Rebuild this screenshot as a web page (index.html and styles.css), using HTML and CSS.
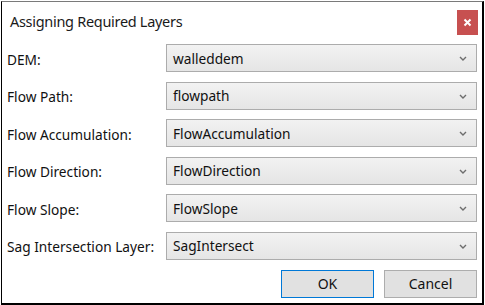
FILE: index.html
```html
<!DOCTYPE html>
<html lang="en">
<head>
    <meta charset="UTF-8">
    <title>Assigning Required Layers</title>
    <link rel="stylesheet" href="styles.css">
</head>
<body>
    <div class="dialog">
        <div class="titlebar">
            <span class="title">Assigning Required Layers</span>
            <button class="close-btn" aria-label="Close">
                <svg width="9" height="9" viewBox="0 0 9 9">
                    <path d="M1.5 1.5 L7.5 7.5 M7.5 1.5 L1.5 7.5" stroke="#fff" stroke-width="2" fill="none"/>
                </svg>
            </button>
        </div>
        <div class="form">
            <label class="field-label">DEM:</label>
            <div class="combo"><span>walleddem</span><svg class="chev" width="8" height="5" viewBox="0 0 8 5"><path d="M1 1 L4 4 L7 1" stroke="#6d6d6d" stroke-width="1.4" fill="none"/></svg></div>

            <label class="field-label">Flow Path:</label>
            <div class="combo"><span>flowpath</span><svg class="chev" width="8" height="5" viewBox="0 0 8 5"><path d="M1 1 L4 4 L7 1" stroke="#6d6d6d" stroke-width="1.4" fill="none"/></svg></div>

            <label class="field-label">Flow Accumulation:</label>
            <div class="combo"><span>FlowAccumulation</span><svg class="chev" width="8" height="5" viewBox="0 0 8 5"><path d="M1 1 L4 4 L7 1" stroke="#6d6d6d" stroke-width="1.4" fill="none"/></svg></div>

            <label class="field-label">Flow Direction:</label>
            <div class="combo"><span>FlowDirection</span><svg class="chev" width="8" height="5" viewBox="0 0 8 5"><path d="M1 1 L4 4 L7 1" stroke="#6d6d6d" stroke-width="1.4" fill="none"/></svg></div>

            <label class="field-label">Flow Slope:</label>
            <div class="combo"><span>FlowSlope</span><svg class="chev" width="8" height="5" viewBox="0 0 8 5"><path d="M1 1 L4 4 L7 1" stroke="#6d6d6d" stroke-width="1.4" fill="none"/></svg></div>

            <label class="field-label">Sag Intersection Layer:</label>
            <div class="combo"><span>SagIntersect</span><svg class="chev" width="8" height="5" viewBox="0 0 8 5"><path d="M1 1 L4 4 L7 1" stroke="#6d6d6d" stroke-width="1.4" fill="none"/></svg></div>
        </div>
        <div class="actions">
            <button class="btn btn-default">OK</button>
            <button class="btn">Cancel</button>
        </div>
    </div>
</body>
</html>
```

FILE: styles.css
```css
body {
    margin: 0;
    background-color: #ffffff;
    font-family: "Noto Sans", "Open Sans", sans-serif;
    color: #000;
}
.dialog {
    box-sizing: border-box;
    margin: 1px 0 0 1px;
    width: 483px;
    height: 304px;
    border-top: 1px solid #7a7a7a;
    border-left: 1px solid #000;
    border-right: 2px solid #000;
    border-bottom: 2px solid #000;
    background-color: #fff;
    padding: 0 5px 0 5px;
}
.titlebar {
    display: flex;
    justify-content: space-between;
    align-items: flex-start;
    height: 42px;
}
.title {
    font-size: 14.5px;
    letter-spacing: -0.3px;
    margin: 9px 0 0 3px;
    color: #1a1a1a;
}
.close-btn {
    width: 21px;
    height: 25px;
    margin: 8px -1px 0 0;
    border: none;
    padding: 0;
    background-color: #c75050;
    display: flex;
    align-items: center;
    justify-content: center;
}
.form {
    display: grid;
    grid-template-columns: 159px 1fr;
    grid-auto-rows: 28px;
    row-gap: 9.6px;
}
.field-label {
    font-size: 13.7px;
    display: flex;
    align-items: center;
    color: #111;
    padding-top: 2px;
}
.combo {
    box-sizing: border-box;
    border: 1px solid #acacac;
    background: linear-gradient(#f2f2f2, #e5e5e5);
    display: flex;
    align-items: center;
    justify-content: space-between;
    padding: 0 9px 0 6px;
    font-size: 13.7px;
    color: #111;
}
.chev {
    margin-top: 1px;
}
.actions {
    display: flex;
    justify-content: flex-end;
    gap: 10px;
    margin-top: 9.6px;
}
.btn {
    box-sizing: border-box;
    width: 93px;
    height: 28px;
    border: 1px solid #adadad;
    background-color: #e1e1e1;
    font-family: "Noto Sans", "Open Sans", sans-serif;
    font-size: 14px;
    color: #111;
    padding: 0;
}
.btn-default {
    border-color: #0078d7;
}
```
